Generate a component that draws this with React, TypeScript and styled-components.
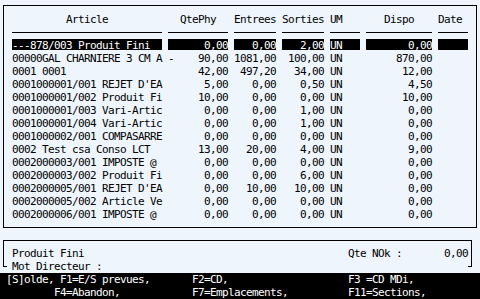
import React from 'react';
import styled, { createGlobalStyle } from 'styled-components';

// 80 x 23 character screen, 6x13 px cells
const COLS = '150px 60px 42px 42px 30px 66px 30px';

const GlobalStyle = createGlobalStyle`
  html, body {
    margin: 0;
    padding: 0;
    background: #eef5fc;
  }
  body {
    font-family: "DejaVu Sans Mono", "Liberation Mono", monospace;
    font-size: 11px;
    letter-spacing: -0.62px;
    color: #000;
  }
`;

const Screen = styled.div`
  width: 480px;
  height: 299px;
  display: flex;
  flex-direction: column;
  background: #eef5fc;
  overflow: hidden;
`;

const TableFrame = styled.div`
  margin: 5px 3px 0 3px;
  height: 223px;
  box-sizing: border-box;
  border: 1px solid #000;
  padding: 7px 0 0 8px;
`;

const Row = styled.div`
  display: grid;
  grid-template-columns: ${COLS};
  column-gap: 6px;
  height: 13px;
  line-height: 13px;
  white-space: pre;
`;

const Cell = styled.div<{ $align?: 'left' | 'right' | 'center'; $hl?: boolean }>`
  text-align: ${({ $align }) => $align ?? 'left'};
  height: 11px;
  background: ${({ $hl }) => ($hl ? '#000' : 'transparent')};
  color: ${({ $hl }) => ($hl ? '#fff' : '#000')};
  overflow: visible;
`;

const Rule = styled.div`
  height: 1px;
  margin-top: 6px;
  background: #000;
`;

const InfoBox = styled.div`
  position: relative;
  margin: 12px 0 0 3px;
  width: 469px;
  box-sizing: border-box;
  border-top: 1px solid #000;
  padding: 6px 0 0 9px;

  &::before,
  &::after {
    content: '';
    position: absolute;
    top: -1px;
    width: 3px;
    height: 26px;
    border-bottom: 1px solid #000;
  }
  &::before {
    left: 0;
    border-left: 1px solid #000;
  }
  &::after {
    right: 0;
    border-right: 1px solid #000;
  }
`;

const InfoRow = styled.div`
  display: grid;
  grid-template-columns: 336px 54px 66px;
  height: 13px;
  line-height: 13px;
  white-space: pre;
`;

const Value = styled.span`
  text-align: right;
`;

const KeyBar = styled.div`
  background: #000;
  color: #fff;
  height: 26px;
  padding-left: 6px;
`;

const KeyRow = styled.div`
  display: grid;
  grid-template-columns: 186px 156px 1fr;
  height: 13px;
  line-height: 13px;
  white-space: pre;
`;

interface Line {
  article: string;
  qte: string;
  entrees: string;
  sorties: string;
  dispo: string;
  hl?: boolean;
}

const lines: Line[] = [
  { article: '---878/003 Produit Fini', qte: '0,00', entrees: '0,00', sorties: '2,00', dispo: '0,00', hl: true },
  { article: '00000GAL CHARNIERE 3 CM A -', qte: '90,00', entrees: '1081,00', sorties: '100,00', dispo: '870,00' },
  { article: '0001 0001', qte: '42,00', entrees: '497,20', sorties: '34,00', dispo: '12,00' },
  { article: "0001000001/001 REJET D'EA", qte: '5,00', entrees: '0,00', sorties: '0,50', dispo: '4,50' },
  { article: '0001000001/002 Produit Fi', qte: '10,00', entrees: '0,00', sorties: '0,00', dispo: '10,00' },
  { article: '0001000001/003 Vari-Artic', qte: '0,00', entrees: '0,00', sorties: '1,00', dispo: '0,00' },
  { article: '0001000001/004 Vari-Artic', qte: '0,00', entrees: '0,00', sorties: '1,00', dispo: '0,00' },
  { article: '0001000002/001 COMPASARRE', qte: '0,00', entrees: '0,00', sorties: '0,00', dispo: '0,00' },
  { article: '0002 Test csa Conso LCT', qte: '13,00', entrees: '20,00', sorties: '4,00', dispo: '9,00' },
  { article: '0002000003/001 IMPOSTE @', qte: '0,00', entrees: '0,00', sorties: '0,00', dispo: '0,00' },
  { article: '0002000003/002 Produit Fi', qte: '0,00', entrees: '0,00', sorties: '6,00', dispo: '0,00' },
  { article: "0002000005/001 REJET D'EA", qte: '0,00', entrees: '10,00', sorties: '10,00', dispo: '0,00' },
  { article: '0002000005/002 Article Ve', qte: '0,00', entrees: '0,00', sorties: '0,00', dispo: '0,00' },
  { article: '0002000006/001 IMPOSTE @', qte: '0,00', entrees: '0,00', sorties: '0,00', dispo: '0,00' },
];

const App: React.FC = () => {
  return (
    <Screen>
      <GlobalStyle />
      <TableFrame>
        <Row>
          <Cell $align="center">Article</Cell>
          <Cell $align="center">QtePhy</Cell>
          <Cell $align="center">Entrees</Cell>
          <Cell $align="center">Sorties</Cell>
          <Cell>UM</Cell>
          <Cell $align="center">Dispo</Cell>
          <Cell>Date</Cell>
        </Row>
        <Row>
          {Array.from({ length: 7 }).map((_, i) => (
            <div key={i}>
              <Rule />
            </div>
          ))}
        </Row>
        {lines.map((l, index) => (
          <Row key={index}>
            <Cell $hl={l.hl}>{l.article}</Cell>
            <Cell $align="right" $hl={l.hl}>{l.qte}</Cell>
            <Cell $align="right" $hl={l.hl}>{l.entrees}</Cell>
            <Cell $align="right" $hl={l.hl}>{l.sorties}</Cell>
            <Cell $hl={l.hl}>UN</Cell>
            <Cell $align="right" $hl={l.hl}>{l.dispo}</Cell>
            <Cell $hl={l.hl}></Cell>
          </Row>
        ))}
      </TableFrame>
      <InfoBox>
        <InfoRow>
          <span>Produit Fini</span>
          <span>Qte NOk :</span>
          <Value>0,00</Value>
        </InfoRow>
        <InfoRow>
          <span>Mot Directeur :</span>
        </InfoRow>
      </InfoBox>
      <KeyBar>
        <KeyRow>
          <span>[S]olde, F1=E/S prevues,</span>
          <span>F2=CD,</span>
          <span>F3 =CD MDi,</span>
        </KeyRow>
        <KeyRow>
          <span>{'        F4=Abandon,'}</span>
          <span>F7=Emplacements,</span>
          <span>F11=Sections,</span>
        </KeyRow>
      </KeyBar>
    </Screen>
  );
};

export default App;
